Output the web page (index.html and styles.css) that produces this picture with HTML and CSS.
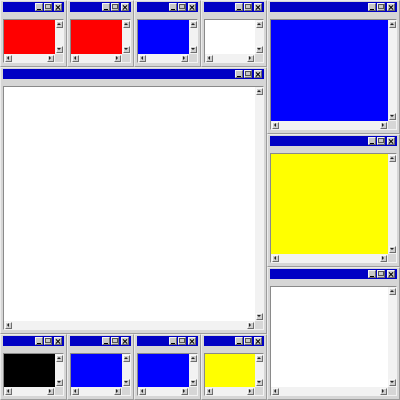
FILE: index.html
```html
<!DOCTYPE html>
<html>
<head>
<meta charset="utf-8">
<link rel="stylesheet" href="styles.css">
</head>
<body>
<div class="desk">
  <div class="win a1">
    <div class="title"><span class="tb min"></span><span class="tb max"></span><span class="tb close"></span></div>
    <div class="client"><div class="view red"></div><div class="vs"><span class="sb up"></span><span class="sb down"></span></div><div class="hs"><span class="sb left"></span><span class="sb right"></span></div><div class="corner"></div></div>
  </div>
  <div class="win a2">
    <div class="title"><span class="tb min"></span><span class="tb max"></span><span class="tb close"></span></div>
    <div class="client"><div class="view red"></div><div class="vs"><span class="sb up"></span><span class="sb down"></span></div><div class="hs"><span class="sb left"></span><span class="sb right"></span></div><div class="corner"></div></div>
  </div>
  <div class="win a3">
    <div class="title"><span class="tb min"></span><span class="tb max"></span><span class="tb close"></span></div>
    <div class="client"><div class="view blue"></div><div class="vs"><span class="sb up"></span><span class="sb down"></span></div><div class="hs"><span class="sb left"></span><span class="sb right"></span></div><div class="corner"></div></div>
  </div>
  <div class="win a4">
    <div class="title"><span class="tb min"></span><span class="tb max"></span><span class="tb close"></span></div>
    <div class="client"><div class="view white"></div><div class="vs"><span class="sb up"></span><span class="sb down"></span></div><div class="hs"><span class="sb left"></span><span class="sb right"></span></div><div class="corner"></div></div>
  </div>
  <div class="win a5">
    <div class="title"><span class="tb min"></span><span class="tb max"></span><span class="tb close"></span></div>
    <div class="client"><div class="view blue"></div><div class="vs"><span class="sb up"></span><span class="sb down"></span></div><div class="hs"><span class="sb left"></span><span class="sb right"></span></div><div class="corner"></div></div>
  </div>
  <div class="win a6">
    <div class="title"><span class="tb min"></span><span class="tb max"></span><span class="tb close"></span></div>
    <div class="client"><div class="view white"></div><div class="vs"><span class="sb up"></span><span class="sb down"></span></div><div class="hs"><span class="sb left"></span><span class="sb right"></span></div><div class="corner"></div></div>
  </div>
  <div class="win a7">
    <div class="title"><span class="tb min"></span><span class="tb max"></span><span class="tb close"></span></div>
    <div class="client"><div class="view yellow"></div><div class="vs"><span class="sb up"></span><span class="sb down"></span></div><div class="hs"><span class="sb left"></span><span class="sb right"></span></div><div class="corner"></div></div>
  </div>
  <div class="win a8">
    <div class="title"><span class="tb min"></span><span class="tb max"></span><span class="tb close"></span></div>
    <div class="client"><div class="view white"></div><div class="vs"><span class="sb up"></span><span class="sb down"></span></div><div class="hs"><span class="sb left"></span><span class="sb right"></span></div><div class="corner"></div></div>
  </div>
  <div class="win a9">
    <div class="title"><span class="tb min"></span><span class="tb max"></span><span class="tb close"></span></div>
    <div class="client"><div class="view black"></div><div class="vs"><span class="sb up"></span><span class="sb down"></span></div><div class="hs"><span class="sb left"></span><span class="sb right"></span></div><div class="corner"></div></div>
  </div>
  <div class="win a10">
    <div class="title"><span class="tb min"></span><span class="tb max"></span><span class="tb close"></span></div>
    <div class="client"><div class="view blue"></div><div class="vs"><span class="sb up"></span><span class="sb down"></span></div><div class="hs"><span class="sb left"></span><span class="sb right"></span></div><div class="corner"></div></div>
  </div>
  <div class="win a11">
    <div class="title"><span class="tb min"></span><span class="tb max"></span><span class="tb close"></span></div>
    <div class="client"><div class="view blue"></div><div class="vs"><span class="sb up"></span><span class="sb down"></span></div><div class="hs"><span class="sb left"></span><span class="sb right"></span></div><div class="corner"></div></div>
  </div>
  <div class="win a12">
    <div class="title"><span class="tb min"></span><span class="tb max"></span><span class="tb close"></span></div>
    <div class="client"><div class="view yellow"></div><div class="vs"><span class="sb up"></span><span class="sb down"></span></div><div class="hs"><span class="sb left"></span><span class="sb right"></span></div><div class="corner"></div></div>
  </div>
</div>
</body>
</html>
```
FILE: styles.css
```css
html, body {
  margin: 0;
  padding: 0;
  background: #d4d4d4;
}
.desk {
  width: 400px;
  height: 400px;
  display: grid;
  grid-template-columns: 67px 67px 67px 66px 67px 66px;
  grid-template-rows: 67px 67px 67px 66px 67px 66px;
  overflow: hidden;
}
.win {
  box-sizing: border-box;
  background: #d6d6d6;
  border-right: 1px solid #9c9c9c;
  border-bottom: 1px solid #9c9c9c;
  border-left: 1px solid #ececec;
  border-top: 1px solid #ececec;
  padding: 1px 2px 3px 2px;
  display: flex;
  flex-direction: column;
  min-width: 0;
  min-height: 0;
}
.a1 { grid-column: 1; grid-row: 1; }
.a2 { grid-column: 2; grid-row: 1; }
.a3 { grid-column: 3; grid-row: 1; }
.a4 { grid-column: 4; grid-row: 1; }
.a5 { grid-column: 5 / 7; grid-row: 1 / 3; }
.a6 { grid-column: 1 / 5; grid-row: 2 / 6; }
.a7 { grid-column: 5 / 7; grid-row: 3 / 5; }
.a8 { grid-column: 5 / 7; grid-row: 5 / 7; }
.a9 { grid-column: 1; grid-row: 6; }
.a10 { grid-column: 2; grid-row: 6; }
.a11 { grid-column: 3; grid-row: 6; }
.a12 { grid-column: 4; grid-row: 6; }

.title {
  height: 10px;
  background: #0000c4;
  display: flex;
  justify-content: flex-end;
  align-items: center;
  padding-right: 2px;
  flex: none;
}
.tb {
  position: relative;
  box-sizing: border-box;
  width: 8px;
  height: 8px;
  background: #c8c8c8;
  border-top: 1px solid #f4f4f4;
  border-left: 1px solid #f4f4f4;
  border-right: 1px solid #6a6a6a;
  border-bottom: 1px solid #6a6a6a;
  margin-left: 1px;
}
.tb.close { margin-left: 2px; }
.min::after {
  content: "";
  position: absolute;
  left: 1px;
  bottom: 0;
  width: 4px;
  height: 1px;
  background: #000;
}
.max::after {
  content: "";
  position: absolute;
  left: 0;
  top: 0;
  width: 4px;
  height: 3px;
  border: 1px solid #555;
}
.close::before, .close::after {
  content: "";
  position: absolute;
  left: 0;
  top: 2.5px;
  width: 6px;
  height: 1.3px;
  background: #000;
  transform: rotate(45deg);
}
.close::after { transform: rotate(-45deg); }

.client {
  margin-top: 7px;
  flex: 1;
  min-height: 0;
  display: grid;
  grid-template-columns: 1fr 8px;
  grid-template-rows: 1fr 8px;
  border-top: 1px solid #8a8a8a;
  border-left: 1px solid #8a8a8a;
  border-right: 1px solid #f2f2f2;
  border-bottom: 1px solid #f2f2f2;
}
.view { min-width: 0; min-height: 0; }
.red { background: #ff0000; }
.blue { background: #0000ff; }
.white { background: #ffffff; }
.yellow { background: #ffff00; }
.black { background: #000000; }

.vs {
  background: #f2f2f2;
  display: flex;
  flex-direction: column;
  justify-content: space-between;
  align-items: center;
  padding: 1px 0;
  min-height: 0;
}
.hs {
  background: #f2f2f2;
  display: flex;
  justify-content: space-between;
  align-items: center;
  padding: 0 1px;
  min-width: 0;
}
.corner { background: #d6d6d6; }

.sb {
  position: relative;
  box-sizing: border-box;
  width: 7px;
  height: 7px;
  background: #cfcfcf;
  border-top: 1px solid #f8f8f8;
  border-left: 1px solid #f8f8f8;
  border-right: 1px solid #6e6e6e;
  border-bottom: 1px solid #6e6e6e;
  flex: none;
}
.sb::after {
  content: "";
  position: absolute;
  width: 0;
  height: 0;
}
.up::after {
  left: 0;
  top: 1px;
  border-left: 2.5px solid transparent;
  border-right: 2.5px solid transparent;
  border-bottom: 2.5px solid #222;
}
.down::after {
  left: 0;
  top: 1px;
  border-left: 2.5px solid transparent;
  border-right: 2.5px solid transparent;
  border-top: 2.5px solid #222;
}
.left::after {
  left: 1px;
  top: 0;
  border-top: 2.5px solid transparent;
  border-bottom: 2.5px solid transparent;
  border-right: 2.5px solid #222;
}
.right::after {
  left: 1px;
  top: 0;
  border-top: 2.5px solid transparent;
  border-bottom: 2.5px solid transparent;
  border-left: 2.5px solid #222;
}
```
